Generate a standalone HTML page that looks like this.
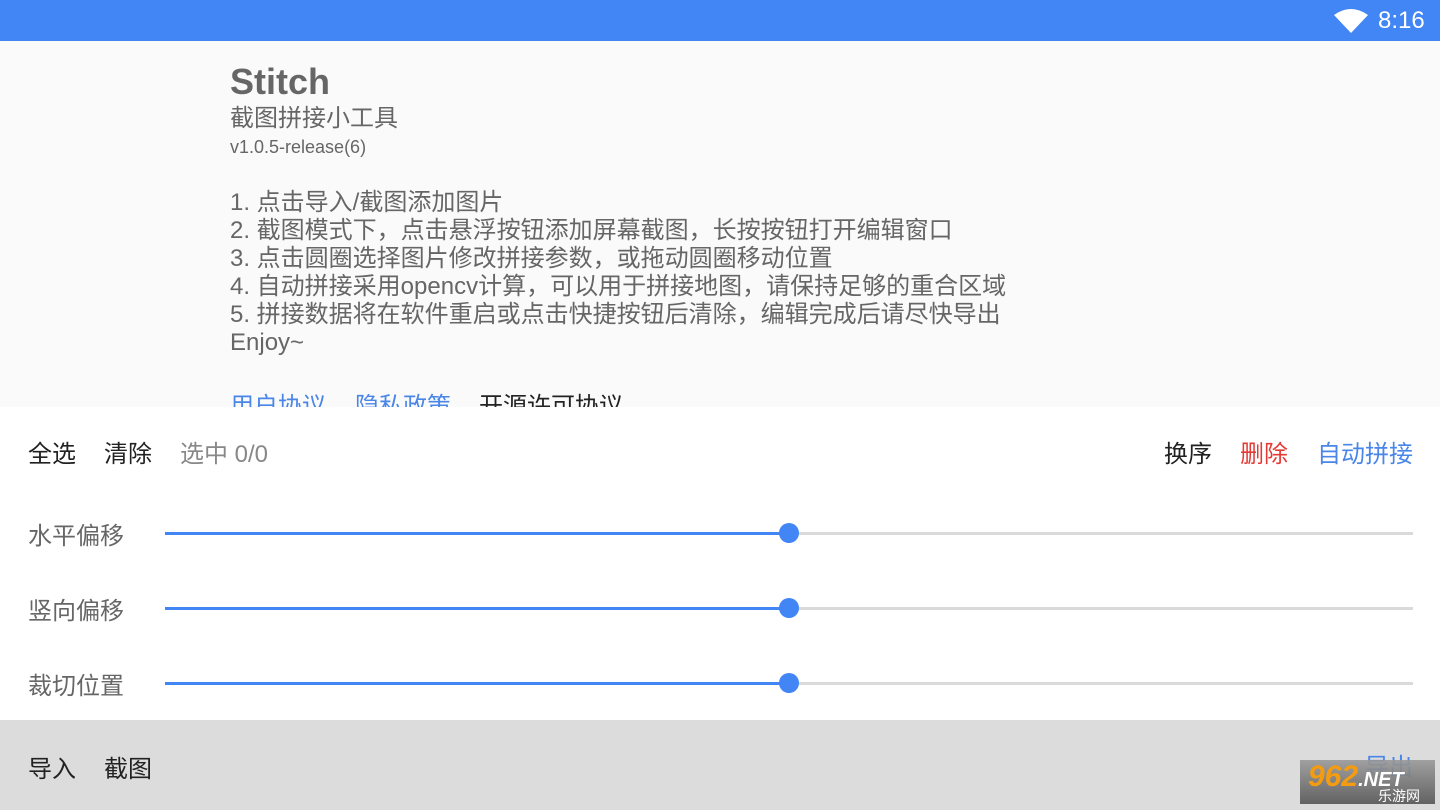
<!DOCTYPE html><html><head><meta charset="utf-8"><style>
body{margin:0;width:1440px;height:810px;overflow:hidden;font-family:"Liberation Sans","Noto Sans CJK SC",sans-serif;background:#fafafa;position:relative}
.a{position:absolute;white-space:nowrap}
.top{position:absolute;left:0;top:0;width:1440px;height:41px;background:#4285f4}
.clip{position:absolute;left:0;top:41px;width:1440px;height:366px;overflow:hidden}
.l{color:#666;font-size:24px;left:230px;line-height:28px}
.panel{position:absolute;left:0;top:407px;width:1440px;height:313px;background:#fff}
.bot{position:absolute;left:0;top:720px;width:1440px;height:90px;background:#dcdcdc}
.t{font-size:24px;color:#222}
.track{position:absolute;left:165px;width:1248px;height:3px;background:#dadada}
.fill{position:absolute;left:0;top:0;width:624px;height:3px;background:#4285f4}
.dot{position:absolute;left:614px;top:-9px;width:20px;height:20px;border-radius:50%;background:#4285f4}
</style></head><body>
<div class="top"></div>
<svg class="a" style="left:1334px;top:9px" width="34" height="24" viewBox="0 0 34 24"><path d="M0 6 Q17 -6 34 6 L17 24Z" fill="#fff"/></svg>
<div class="a" style="left:1378px;top:7px;color:#fff;font-size:24px">8:16</div>
<div class="clip">
<div class="a" style="left:230px;top:20px;font-size:36px;font-weight:bold;color:#666">Stitch</div>
<div class="a l" style="top:64px">截图拼接小工具</div>
<div class="a" style="left:230px;top:96px;font-size:18px;color:#666">v1.0.5-release(6)</div>
<div class="a l" style="top:148px">1. 点击导入/截图添加图片</div>
<div class="a l" style="top:176px">2. 截图模式下，点击悬浮按钮添加屏幕截图，长按按钮打开编辑窗口</div>
<div class="a l" style="top:204px">3. 点击圆圈选择图片修改拼接参数，或拖动圆圈移动位置</div>
<div class="a l" style="top:232px">4. 自动拼接采用opencv计算，可以用于拼接地图，请保持足够的重合区域</div>
<div class="a l" style="top:260px">5. 拼接数据将在软件重启或点击快捷按钮后清除，编辑完成后请尽快导出</div>
<div class="a l" style="top:288px">Enjoy~</div>
<div class="a" style="left:230px;top:345px;font-size:24px;color:#4a86e8">用户协议</div>
<div class="a" style="left:355px;top:345px;font-size:24px;color:#4a86e8">隐私政策</div>
<div class="a" style="left:479px;top:345px;font-size:24px;color:#222">开源许可协议</div>
</div>
<div class="panel">
<div class="a t" style="left:28px;top:27px">全选</div>
<div class="a t" style="left:104px;top:27px">清除</div>
<div class="a" style="left:180px;top:27px;font-size:24px;color:#888">选中 0/0</div>
<div class="a t" style="left:1164px;top:27px">换序</div>
<div class="a" style="left:1240px;top:27px;font-size:24px;color:#e53935">删除</div>
<div class="a" style="left:1317px;top:27px;font-size:24px;color:#4a86e8">自动拼接</div>
<div class="a" style="left:28px;top:109px;font-size:24px;color:#666">水平偏移</div>
<div class="track" style="top:125px"><div class="fill"></div><div class="dot"></div></div>
<div class="a" style="left:28px;top:184px;font-size:24px;color:#666">竖向偏移</div>
<div class="track" style="top:200px"><div class="fill"></div><div class="dot"></div></div>
<div class="a" style="left:28px;top:259px;font-size:24px;color:#666">裁切位置</div>
<div class="track" style="top:275px"><div class="fill"></div><div class="dot"></div></div>
</div>
<div class="bot">
<div class="a t" style="left:28px;top:29px">导入</div>
<div class="a t" style="left:104px;top:29px">截图</div>
<div class="a" style="left:1365px;top:27px;font-size:24px;color:#4a86e8">导出</div>
<div class="a" style="left:1300px;top:40px;width:135px;height:44px;background:linear-gradient(#999,#555);opacity:.9"></div>
<div class="a" style="left:1308px;top:40px;font-size:30px;font-weight:bold;font-style:italic;color:#f39c12">962<span style="color:#fff;font-size:20px">.NET</span></div>
<div class="a" style="left:1378px;top:66px;font-size:14px;color:#fff">乐游网</div>
</div>
</body></html>
